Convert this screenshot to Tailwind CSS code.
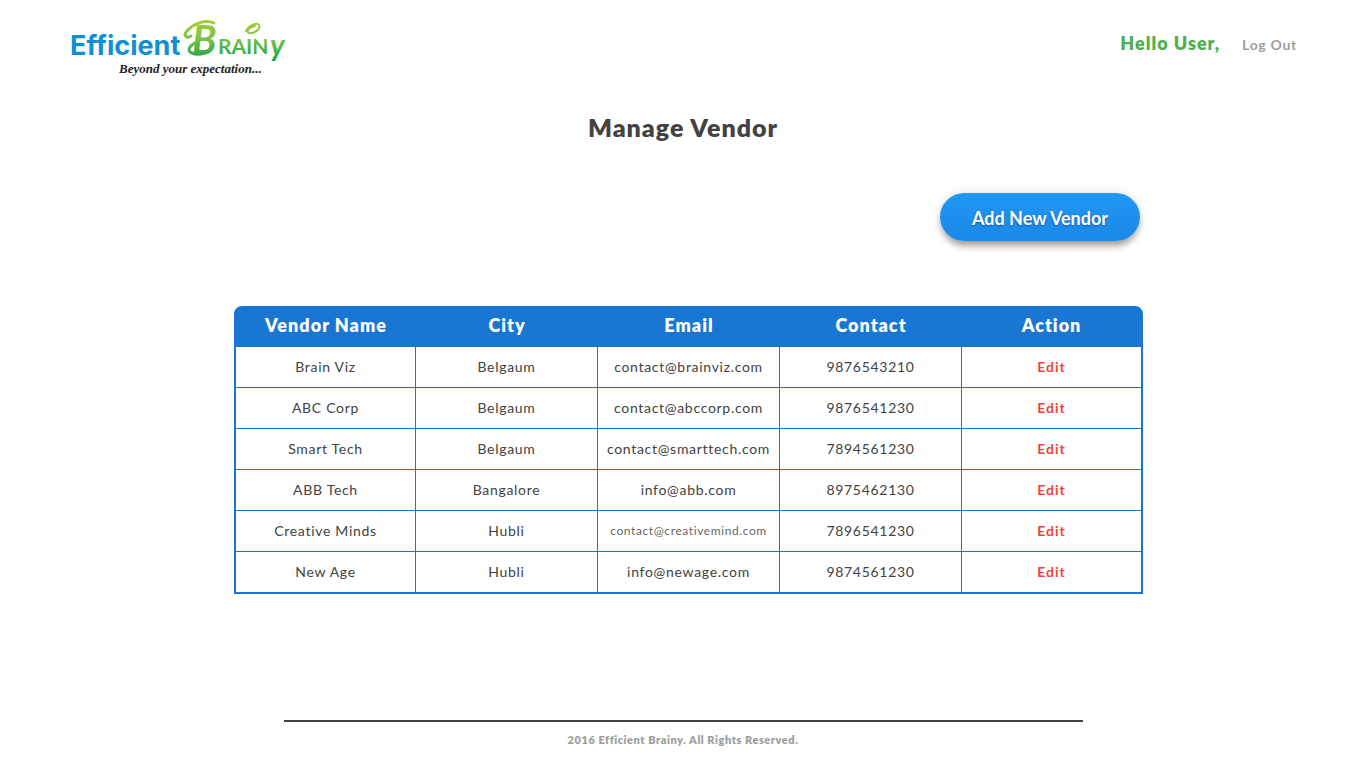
<!DOCTYPE html>
<html lang="en">
<head>
<meta charset="utf-8">
<meta name="viewport" content="width=device-width, initial-scale=1">
<title>Manage Vendor</title>
<script src="https://cdn.jsdelivr.net/npm/@tailwindcss/browser@4"></script>
</head>
<body class="flex min-h-screen flex-col bg-white font-['Lato',sans-serif] text-[#424242]">
<header class="flex items-start justify-between px-[69px] pt-4">
  <a href="#" aria-label="Efficient Brainy">
    <svg class="block h-16 w-[220px] overflow-visible" viewBox="0 0 220 64" fill="none">
      <defs>
        <linearGradient id="leaf" gradientUnits="userSpaceOnUse" x1="0" y1="4" x2="0" y2="46">
          <stop offset="0" stop-color="#a6ce39"/>
          <stop offset=".45" stop-color="#7cc243"/>
          <stop offset="1" stop-color="#12a04a"/>
        </linearGradient>
      </defs>
      <text x="1" y="39" font-family="Inter, sans-serif" font-weight="700" font-size="27" fill="#0e90d2">Efficient</text>
      <g fill="url(#leaf)" font-family="Lato, sans-serif">
        <text x="123" y="38" font-weight="700" font-style="italic" font-size="40">B</text>
        <text x="149" y="38" font-weight="700" font-size="21">RAIN</text>
        <text x="201" y="40" font-weight="700" font-style="italic" font-size="30">y</text>
      </g>
      <g stroke="url(#leaf)" stroke-linecap="round">
        <path d="M122 20C117 23 114 19 118 15C124 8 136 3 145 7" stroke-width="3"/>
        <path d="M129 26C120 29 117 35 123 37C128 39 134 38 139 36" stroke-width="3"/>
        <path d="M177 15C180 9 188 6 190 9C192 13 185 18 180 17C176 15 181 11 186 10" stroke-width="2"/>
      </g>
      <text x="50" y="57" font-family="'Liberation Serif', serif" font-style="italic" font-weight="700" font-size="13" fill="#222">Beyond your expectation...</text>
    </svg>
  </a>
  <nav class="flex items-baseline gap-[22px] pt-[15px]">
    <span class="text-lg leading-6 font-extrabold tracking-[1px] text-[#4caf50]">Hello User,</span>
    <a href="#" class="text-sm leading-6 font-bold tracking-wider text-[#9e9e9e]">Log Out</a>
  </nav>
</header>

<main class="flex flex-1 flex-col items-center">
  <h1 class="mt-[31px] text-[25px] leading-8 font-extrabold tracking-[1px]">Manage Vendor</h1>
  <div class="ml-[11px] flex w-[909px] max-w-full flex-col">
    <button type="button" class="mt-[50px] mr-[3px] h-12 w-[200px] self-end rounded-full border-t border-[#26a3e8] bg-linear-to-b from-[#2196f3] to-[#1b88e8] text-lg font-bold text-white shadow-[0_7px_8px_-3px_rgba(0,0,0,0.4),0_0_8px_rgba(0,0,0,0.14)] text-shadow-[0_1px_2px_rgba(0,0,0,0.35)]">Add New Vendor</button>
    <table class="mt-[65px] w-full table-fixed border-separate border-spacing-0 rounded-t-lg border-2 border-[#1976d2] bg-[#1976d2] text-center text-sm tracking-wider [&_td]:border-r [&_td]:border-b [&_td]:border-[#1976d2] [&_td]:bg-white [&_td]:p-0 [&_td:last-child]:border-r-0 [&_tr:last-child_td]:border-b-0">
      <colgroup><col class="w-[180px]"><col class="w-[182px]"><col class="w-[182px]"><col class="w-[182px]"><col></colgroup>
      <thead class="text-lg text-white">
        <tr class="h-[39px] [&_th]:p-0 [&_th]:pb-1.5 [&_th]:font-extrabold [&_th]:tracking-[1px]">
          <th scope="col">Vendor Name</th><th scope="col">City</th><th scope="col">Email</th><th scope="col">Contact</th><th scope="col">Action</th>
        </tr>
      </thead>
      <tbody>
        <tr class="h-[41px]"><td>Brain Viz</td><td>Belgaum</td><td>contact@brainviz.com</td><td>9876543210</td><td><a href="#" class="font-bold tracking-[1px] text-[#f44336]">Edit</a></td></tr>
        <tr class="h-[41px]"><td>ABC Corp</td><td>Belgaum</td><td>contact@abccorp.com</td><td>9876541230</td><td><a href="#" class="font-bold tracking-[1px] text-[#f44336]">Edit</a></td></tr>
        <tr class="h-[41px]"><td>Smart Tech</td><td>Belgaum</td><td>contact@smarttech.com</td><td>7894561230</td><td><a href="#" class="font-bold tracking-[1px] text-[#f44336]">Edit</a></td></tr>
        <tr class="h-[41px]"><td>ABB Tech</td><td>Bangalore</td><td>info@abb.com</td><td>8975462130</td><td><a href="#" class="font-bold tracking-[1px] text-[#f44336]">Edit</a></td></tr>
        <tr class="h-[41px]"><td>Creative Minds</td><td>Hubli</td><td class="text-xs tracking-wider text-[#666]">contact@creativemind.com</td><td>7896541230</td><td><a href="#" class="font-bold tracking-[1px] text-[#f44336]">Edit</a></td></tr>
        <tr class="h-10"><td>New Age</td><td>Hubli</td><td>info@newage.com</td><td>9874561230</td><td><a href="#" class="font-bold tracking-[1px] text-[#f44336]">Edit</a></td></tr>
      </tbody>
    </table>
  </div>
</main>

<footer class="mx-auto w-[799px] max-w-full border-t-2 border-[#424242] pt-2.5 pb-5 text-center text-[11px] leading-4 font-extrabold tracking-wider text-[#9e9e9e]">2016 Efficient Brainy. All Rights Reserved.</footer>
</body>
</html>
